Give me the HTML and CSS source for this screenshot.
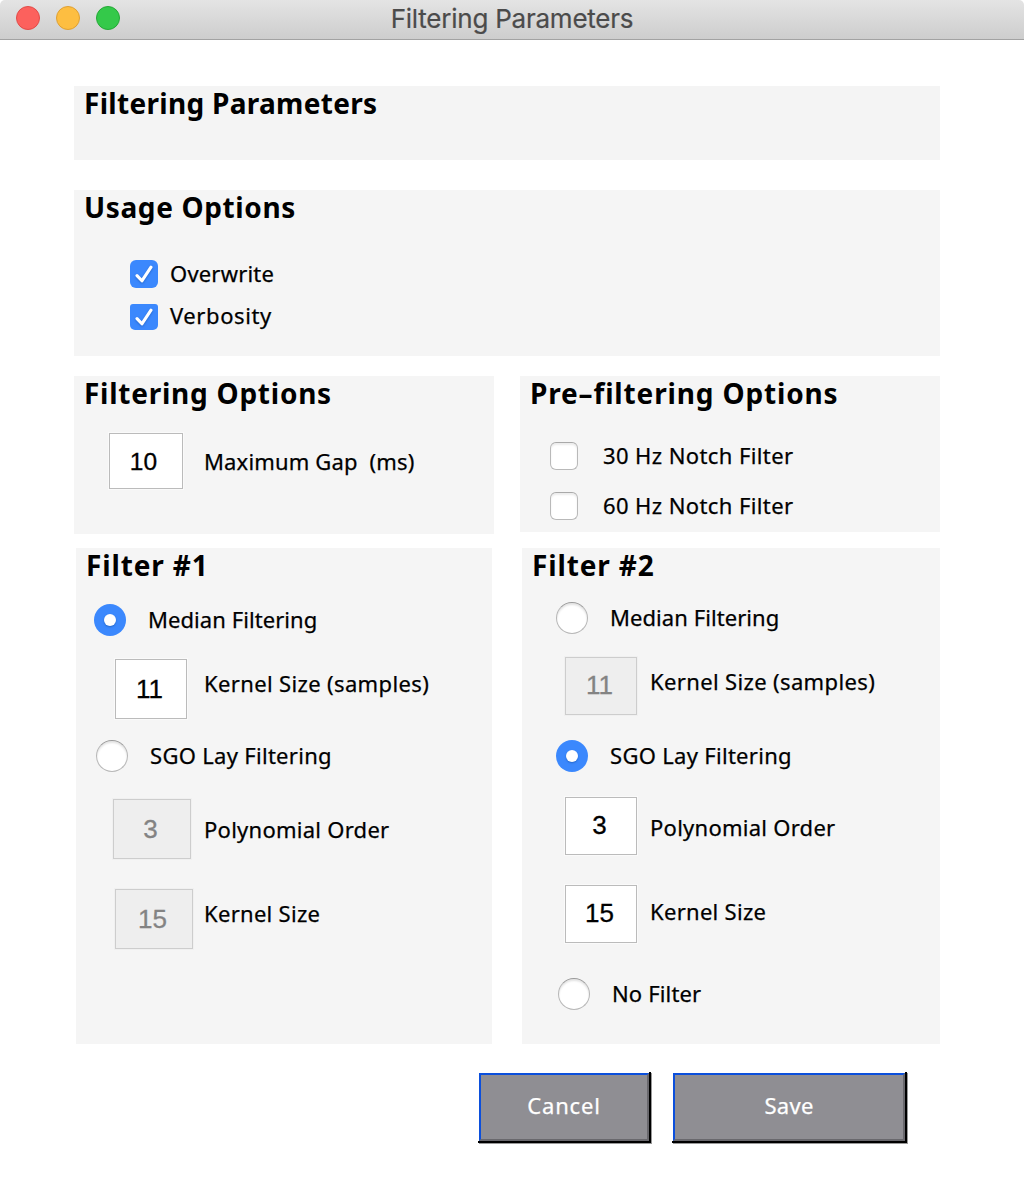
FILE: index.html
```html
<!DOCTYPE html>
<html lang="en">
<head>
<meta charset="utf-8">
<title>Filtering Parameters</title>
<link rel="stylesheet" href="styles.css">
</head>
<body>
<header class="titlebar">
  <div class="lights"><span class="light close"></span><span class="light minimize"></span><span class="light zoom"></span></div>
  <div class="window-title">Filtering Parameters</div>
</header>
<main class="content">
  <section class="panel intro"><h1>Filtering Parameters</h1></section>

  <section class="panel usage">
    <h2 class="h-usage">Usage Options</h2>
    <label class="row overwrite"><span class="check on"><svg viewBox="0 0 28 28"><path d="M7 15.6L11.9 20.8L21 7.2"/></svg></span><span class="label">Overwrite</span></label>
    <label class="row verbosity"><span class="check on short"><svg viewBox="0 1 28 26"><path d="M7 15.6L11.9 20.8L21 7.2"/></svg></span><span class="label">Verbosity</span></label>
  </section>

  <div class="columns options">
    <section class="panel filtering">
      <h2 class="h-filtering">Filtering Options</h2>
      <label class="row gap"><input class="field small" value="10"><span class="label l-gap">Maximum Gap&nbsp; (ms)</span></label>
    </section>
    <section class="panel prefilter">
      <h2 class="h-pre">Pre–filtering Options</h2>
      <label class="row notch-30"><span class="check"></span><span class="label l-notch">30 Hz Notch Filter</span></label>
      <label class="row notch-60"><span class="check"></span><span class="label l-notch">60 Hz Notch Filter</span></label>
    </section>
  </div>

  <div class="columns filters">
    <section class="panel filter-one">
      <h2 class="h-filter">Filter #1</h2>
      <label class="row median"><span class="radio on"></span><span class="label l-median">Median Filtering</span></label>
      <label class="row samples"><input class="field" value="11"><span class="label l-samples">Kernel Size (samples)</span></label>
      <label class="row sgo"><span class="radio"></span><span class="label l-sgo">SGO Lay Filtering</span></label>
      <label class="row order"><input class="field wide" value="3" disabled><span class="label l-order">Polynomial Order</span></label>
      <label class="row kernel"><input class="field wide" value="15" disabled><span class="label l-kernel">Kernel Size</span></label>
    </section>
    <section class="panel filter-two">
      <h2 class="h-filter">Filter #2</h2>
      <label class="row median"><span class="radio"></span><span class="label l-median">Median Filtering</span></label>
      <label class="row samples"><input class="field" value="11" disabled><span class="label l-samples">Kernel Size (samples)</span></label>
      <label class="row sgo"><span class="radio on"></span><span class="label l-sgo">SGO Lay Filtering</span></label>
      <label class="row order"><input class="field" value="3"><span class="label l-order">Polynomial Order</span></label>
      <label class="row kernel"><input class="field" value="15"><span class="label l-kernel">Kernel Size</span></label>
      <label class="row none"><span class="radio"></span><span class="label l-none">No Filter</span></label>
    </section>
  </div>

  <footer class="actions">
    <div class="bevel cancel"><button>Cancel</button></div>
    <div class="bevel save"><button>Save</button></div>
  </footer>
</main>
</body>
</html>
```
FILE: styles.css
```css
* { box-sizing: border-box; }

body {
  margin: 0;
  height: 1178px;
  overflow: hidden;
  background: #fff;
  color: #000;
  font-family: "Noto Sans", "Open Sans", sans-serif;
}

/* Title bar */
.titlebar {
  display: grid;
  grid-template-columns: 1fr auto 1fr;
  height: 40px;
  padding: 0 16px;
  border-bottom: 1px solid #a2a2a2;
  border-radius: 5px 5px 0 0;
  background: linear-gradient(#e4e4e4, #cdcdcd);
}
.lights { display: flex; gap: 16px; padding-top: 6px; }
.light { width: 24px; height: 24px; border: 1px solid; border-radius: 50%; }
.close { background: #fc615d; border-color: #e24b48; }
.minimize { background: #fdbe41; border-color: #dfa033; }
.zoom { background: #34c94a; border-color: #24a936; }
.window-title {
  color: #4b4b4b;
  font: 400 26px/38px Inter, sans-serif;
  letter-spacing: -0.23px;
  -webkit-text-stroke: 0.2px;
}

/* Panels */
.content { padding: 46px 84px 0 74px; }
.panel { background: #f5f5f5; }
.intro { height: 74px; background: #f4f4f4; }
.usage { height: 166px; margin-top: 30px; }
.columns { display: flex; justify-content: space-between; align-items: flex-start; }
.options { margin-top: 20px; height: 158px; }
.filters { margin-top: 14px; padding-left: 2px; }
.filtering { width: 420px; height: 158px; }
.prefilter { width: 420px; height: 156px; }
.filter-one { width: 416px; height: 496px; }
.filter-two { width: 418px; height: 496px; }

h1, h2 {
  margin: 0;
  padding-left: 10px;
  font-size: 28px;
  font-weight: 700;
  line-height: 34px;
  white-space: nowrap;
}
h1 { letter-spacing: 0.3px; }
.h-usage { letter-spacing: 0.62px; }
.h-filtering { letter-spacing: 0.75px; }
.h-pre { letter-spacing: 0.85px; }
.h-filter { letter-spacing: 0.85px; }

/* Rows of one control and its label */
.row { display: flex; align-items: flex-start; }
.label {
  padding-left: 1px;
  font-size: 22px;
  line-height: 24px;
  letter-spacing: 0.3px;
  white-space: nowrap;
  -webkit-text-stroke: 0.25px;
}
.overwrite .label { letter-spacing: 0.2px; }
.verbosity .label { letter-spacing: 0.6px; }
.l-gap { letter-spacing: 0.16px; }
.l-notch { letter-spacing: 0.4px; }
.l-median { letter-spacing: 0.07px; }
.l-samples { letter-spacing: 0.36px; }
.l-order { letter-spacing: 0.26px; }
.l-none { letter-spacing: 0.15px; }

.check {
  flex: none;
  width: 28px;
  height: 28px;
  border: 1px solid #b9b9b9;
  border-top-color: #a9a9a9;
  border-radius: 6px;
  background: #fff;
  box-shadow: inset 0 2px 2px #ececec;
}
.check.on { border: 0; background: #3b88fd; box-shadow: none; }
.check.short { height: 26px; margin-top: 1px; border-radius: 3px 3px 5px 5px; }
.check svg { display: block; width: 100%; height: 100%; filter: drop-shadow(0 1px 1px #2467cc); }
.check path { fill: none; stroke: #fff; stroke-width: 3.1; stroke-linecap: round; stroke-linejoin: round; }

.radio {
  flex: none;
  width: 32px;
  height: 32px;
  border: 1px solid #b8b8b8;
  border-top-color: #999;
  border-radius: 50%;
  background: #fff;
  box-shadow: inset 0 2px 2px #e4e4e4;
}
.radio.on {
  display: grid;
  place-items: center;
  border: 0;
  background: #3b88fd;
  box-shadow: none;
}
.radio.on::after {
  content: "";
  width: 12px;
  height: 12px;
  border-radius: 50%;
  background: #fff;
  box-shadow: 0 1px 2px #2467cc;
}

.field {
  flex: none;
  width: 72px;
  height: 60px;
  margin: 0;
  padding: 0 3px 0 0;
  border: 1px solid #bbb;
  border-radius: 0;
  background: #fff;
  box-shadow: 0 0 0 1px #fafafa;
  color: #000;
  font: 26px "Liberation Sans", sans-serif;
  text-align: center;
  -webkit-text-stroke: 0.3px;
}
.field.small { width: 74px; height: 56px; padding: 1px 5px 0 0; font-size: 24.5px; }
.field.wide { width: 78px; }
.filter-two .field { height: 58px; padding-bottom: 2px; }
.field:disabled { border-color: #cdcdcd; background: #eee; box-shadow: 0 0 0 1px #f0f0f0; color: #838383; }

/* Usage options */
.overwrite, .verbosity { gap: 11px; padding-left: 56px; }
.overwrite { height: 43px; margin-top: 36px; }
.overwrite .label { margin-top: 1px; }

/* Filtering options */
.gap { gap: 20px; padding: 23px 0 0 35px; }
.gap .label { margin-top: 16px; }

/* Pre-filtering options */
.notch-30, .notch-60 { gap: 24px; height: 50px; padding-left: 30px; }
.notch-30 { margin-top: 32px; }
.prefilter .label { margin-top: 1px; }

/* Filter #1 */
.filter-one .median { gap: 21px; height: 55px; margin-top: 22px; padding-left: 18px; }
.filter-one .median .label { margin-top: 3px; }
.filter-one .samples { gap: 16px; height: 81px; padding-left: 39px; }
.filter-one .samples .label { margin-top: 12px; }
.filter-one .sgo { gap: 21px; height: 59px; padding-left: 20px; }
.filter-one .sgo .label { margin-top: 3px; }
.filter-one .order { gap: 12px; height: 90px; padding-left: 37px; }
.filter-one .order .label { margin-top: 18px; }
.filter-one .kernel { gap: 10px; padding-left: 39px; }
.filter-one .kernel .label { margin-top: 12px; }

/* Filter #2 */
.filter-two .median { gap: 21px; height: 55px; margin-top: 20px; padding-left: 34px; }
.filter-two .median .label { margin-top: 3px; }
.filter-two .samples { gap: 12px; height: 83px; padding-left: 43px; }
.filter-two .samples .label { margin-top: 12px; }
.filter-two .sgo { gap: 21px; height: 57px; padding-left: 34px; }
.filter-two .sgo .label { margin-top: 3px; }
.filter-two .order { gap: 12px; height: 88px; padding-left: 43px; }
.filter-two .order .label { margin-top: 18px; }
.filter-two .kernel { gap: 12px; height: 93px; padding-left: 43px; }
.filter-two .kernel .label { margin-top: 14px; }
.filter-two .none { gap: 21px; padding-left: 36px; }
.filter-two .none .label { margin-top: 3px; }

/* Bottom buttons */
.actions { display: flex; justify-content: flex-end; gap: 21px; padding: 28px 33px 0 0; }
.bevel {
  height: 71px;
  padding: 1px 0 0 1px;
  border: solid #000;
  border-width: 0 2px 2px 0;
  background: #fff;
  box-shadow: 1px 1px 0 #999;
}
.cancel { width: 173px; }
.save { width: 235px; }
.bevel button {
  display: block;
  width: 100%;
  height: 68px;
  padding: 0 0 4px;
  border: 2px solid;
  border-color: #0b4fdc #69686d #69686d #0b4fdc;
  background: #8f8e93;
  color: #fff;
  font: 22px/30px "Noto Sans", sans-serif;
  letter-spacing: 0.3px;
  -webkit-text-stroke: 0.25px;
}
.cancel button { letter-spacing: 0.8px; }
```
